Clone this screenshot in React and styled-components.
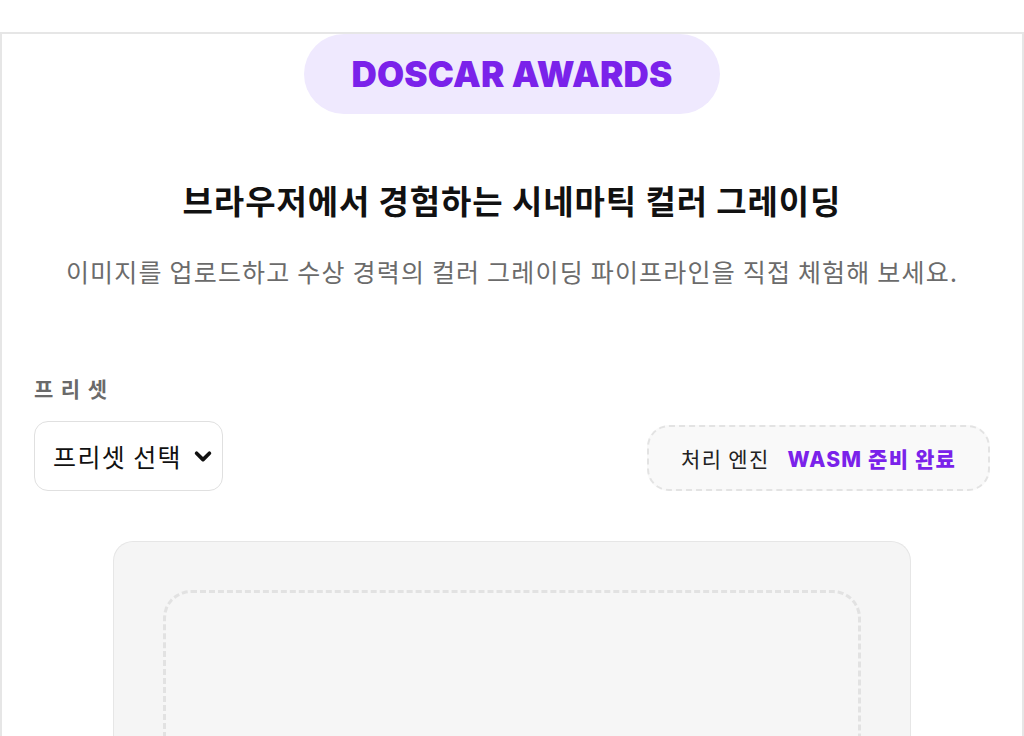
import React from 'react'
import styled, { createGlobalStyle } from 'styled-components'

const GlobalStyle = createGlobalStyle`
  html, body {
    margin: 0;
    padding: 0;
    background: #ffffff;
    font-family: Inter, "Noto Sans CJK KR", sans-serif;
  }
  * {
    box-sizing: border-box;
  }
`

const Frame = styled.div`
  margin-top: 32px;
  border: 2px solid #e6e6e6;
  border-bottom: none;
  min-height: 704px;
  padding: 0 32px;
  display: flex;
  flex-direction: column;
  align-items: stretch;
`

const Badge = styled.div`
  align-self: center;
  width: 416px;
  height: 80px;
  border-radius: 40px;
  background: #efe9fe;
  display: flex;
  align-items: center;
  justify-content: center;
  color: #7a22ea;
  font-family: Inter, sans-serif;
  font-weight: 900;
  font-size: 35px;
  letter-spacing: 0.2px;
`

const Title = styled.h1`
  margin: 64px 0 0;
  text-align: center;
  font-family: "Noto Sans CJK KR", sans-serif;
  font-weight: 700;
  font-size: 33px;
  line-height: 45px;
  letter-spacing: 0.9px;
  color: #111111;
`

const Subtitle = styled.p`
  margin: 30px 0 0;
  text-align: center;
  font-family: "Noto Sans CJK KR", sans-serif;
  font-size: 25px;
  line-height: 36px;
  letter-spacing: 1.2px;
  color: #6b6b6b;
`

const Label = styled.div`
  margin-top: 85px;
  font-family: "Noto Sans CJK KR", sans-serif;
  font-weight: 700;
  font-size: 21px;
  line-height: 28px;
  letter-spacing: 7.5px;
  color: #6a6a6a;
`

const Toolbar = styled.div`
  margin-top: 19px;
  display: flex;
  justify-content: space-between;
  align-items: flex-end;
`

const SelectBox = styled.div`
  height: 70px;
  width: 189px;
  border: 1px solid #e0e0e0;
  border-radius: 14px;
  background: #ffffff;
  display: flex;
  align-items: center;
  justify-content: space-between;
  padding: 0 8px 0 18px;
  font-family: "Noto Sans CJK KR", sans-serif;
  font-size: 25px;
  letter-spacing: 1.4px;
  color: #111111;
`

const EngineStatus = styled.div`
  height: 66px;
  border: 2px dashed #e3e3e3;
  border-radius: 22px;
  background: #f9f9f9;
  display: flex;
  align-items: center;
  gap: 18px;
  padding: 0 32px;
  font-family: "Noto Sans CJK KR", sans-serif;
  font-size: 21px;
  letter-spacing: 1.3px;
  color: #222222;
`

const Ready = styled.span`
  font-family: Inter, "Noto Sans CJK KR", sans-serif;
  font-weight: 800;
  letter-spacing: 1.2px;
  color: #7a22ea;
`

const DropCard = styled.div`
  margin: 50px auto 0;
  width: 798px;
  height: 260px;
  background: #f5f5f5;
  border: 1px solid #e6e6e6;
  border-bottom: none;
  border-radius: 20px 20px 0 0;
  padding: 48px 49px 0;
  display: flex;
`

const DropZone = styled.div`
  flex: 1;
  border: 3px dashed #e2e2e2;
  border-bottom: none;
  border-radius: 28px 28px 0 0;
  background: #f6f6f6;
`

function Chevron() {
  return (
    <svg width="22" height="22" viewBox="0 0 24 24" fill="none">
      <path d="M5 9l7 7 7-7" stroke="#111" strokeWidth="4" strokeLinecap="round" strokeLinejoin="round" />
    </svg>
  )
}

export default function App() {
  return (
    <>
      <GlobalStyle />
      <Frame>
        <Badge>DOSCAR AWARDS</Badge>
        <Title>브라우저에서 경험하는 시네마틱 컬러 그레이딩</Title>
        <Subtitle>이미지를 업로드하고 수상 경력의 컬러 그레이딩 파이프라인을 직접 체험해 보세요.</Subtitle>
        <Label>프리셋</Label>
        <Toolbar>
          <SelectBox>
            <span>프리셋 선택</span>
            <Chevron />
          </SelectBox>
          <EngineStatus>
            <span>처리 엔진</span>
            <Ready>WASM 준비 완료</Ready>
          </EngineStatus>
        </Toolbar>
        <DropCard>
          <DropZone />
        </DropCard>
      </Frame>
    </>
  )
}
